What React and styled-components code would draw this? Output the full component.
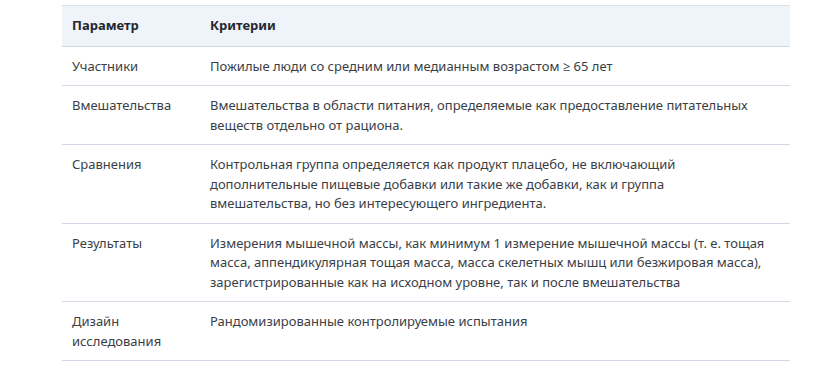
import React from 'react';
import styled, { createGlobalStyle } from 'styled-components';

const GlobalStyle = createGlobalStyle`
  html, body {
    margin: 0;
    padding: 0;
    background: #ffffff;
  }
  body {
    font-family: 'Noto Sans', 'Open Sans', sans-serif;
    color: #333740;
  }
`;

const Page = styled.div`
  padding: 5px 38px 0 62px;
`;

const Table = styled.table`
  width: 728px;
  border-collapse: collapse;
  font-size: 13px;
  line-height: 19.5px;
  border-top: 1px solid #dde1ec;
`;

const HeadCell = styled.th`
  background: #eff3fa;
  text-align: left;
  font-weight: 700;
  color: #24272e;
  padding: 10px 10px;
  border-bottom: 1px solid #d3d8e6;
  width: ${(p) => (p.$first ? '118px' : 'auto')};
`;

const Cell = styled.td`
  vertical-align: top;
  text-align: left;
  padding: 10px 10px 9px;
  border-bottom: 1px solid #d3d8e6;
  color: #3a3e47;
  width: ${(p) => (p.$first ? '118px' : 'auto')};
`;

const CriteriaText = styled.div`
  max-width: 559px;
`;

const rows = [
  ['Участники', 'Пожилые люди со средним или медианным возрастом ≥ 65 лет'],
  ['Вмешательства', 'Вмешательства в области питания, определяемые как предоставление питательных веществ отдельно от рациона.'],
  ['Сравнения', 'Контрольная группа определяется как продукт плацебо, не включающий дополнительные пищевые добавки или такие же добавки, как и группа вмешательства, но без интересующего ингредиента.'],
  ['Результаты', 'Измерения мышечной массы, как минимум 1 измерение мышечной массы (т. е. тощая масса, аппендикулярная тощая масса, масса скелетных мышц или безжировая масса), зарегистрированные как на исходном уровне, так и после вмешательства'],
  ['Дизайн исследования', 'Рандомизированные контролируемые испытания'],
];

export default function App() {
  return (
    <Page>
      <GlobalStyle />
      <Table>
        <thead>
          <tr>
            <HeadCell $first>Параметр</HeadCell>
            <HeadCell>Критерии</HeadCell>
          </tr>
        </thead>
        <tbody>
          {rows.map(([param, criteria]) => (
            <tr key={param}>
              <Cell $first>{param}</Cell>
              <Cell>
                <CriteriaText>{criteria}</CriteriaText>
              </Cell>
            </tr>
          ))}
        </tbody>
      </Table>
    </Page>
  );
}
